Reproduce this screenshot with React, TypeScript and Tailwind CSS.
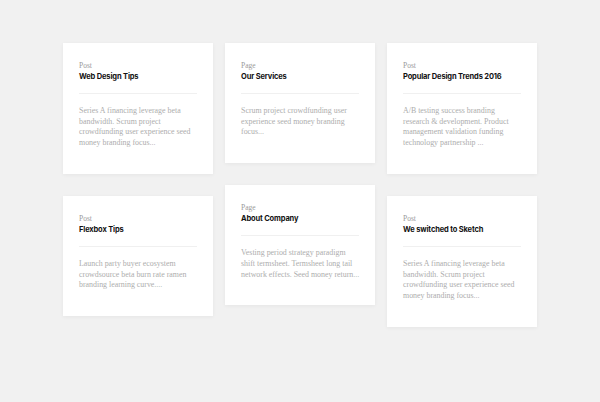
import React from "react";

type Card = { kind: string; title: string; lines: string[] };

const columns: Card[][] = [
  [
    {
      kind: "Post",
      title: "Web Design Tips",
      lines: [
        "Series A financing leverage beta",
        "bandwidth. Scrum project",
        "crowdfunding user experience seed",
        "money branding focus...",
      ],
    },
    {
      kind: "Post",
      title: "Flexbox Tips",
      lines: [
        "Launch party buyer ecosystem",
        "crowdsource beta burn rate ramen",
        "branding learning curve....",
      ],
    },
  ],
  [
    {
      kind: "Page",
      title: "Our Services",
      lines: [
        "Scrum project crowdfunding user",
        "experience seed money branding",
        "focus...",
      ],
    },
    {
      kind: "Page",
      title: "About Company",
      lines: [
        "Vesting period strategy paradigm",
        "shift termsheet. Termsheet long tail",
        "network effects. Seed money return...",
      ],
    },
  ],
  [
    {
      kind: "Post",
      title: "Popular Design Trends 2016",
      lines: [
        "A/B testing success branding",
        "research & development. Product",
        "management validation funding",
        "technology partnership ...",
      ],
    },
    {
      kind: "Post",
      title: "We switched to Sketch",
      lines: [
        "Series A financing leverage beta",
        "bandwidth. Scrum project",
        "crowdfunding user experience seed",
        "money branding focus...",
      ],
    },
  ],
];

function ResultCard({ card }: { card: Card }) {
  return (
    <div className="w-[150px] bg-white px-4 pb-[25px] pt-[17px] shadow-[0_1px_4px_rgba(0,0,0,0.05)]">
      <div className="font-['Liberation_Serif',serif] text-[7.5px] leading-[11px] text-[#9a9a9a]">
        {card.kind}
      </div>
      <div className="font-['Inter',sans-serif] text-[7.5px] font-bold leading-[12px] tracking-[-0.15px] text-[#111]">
        {card.title}
      </div>
      <div className="mt-[10px] h-px bg-[#f0f0f0]" />
      <p className="mt-[12px] font-['Liberation_Serif',serif] text-[7.9px] leading-[10.7px] text-[#adadad]">
        {card.lines.map((l) => (
          <span key={l} className="block whitespace-nowrap">
            {l}
          </span>
        ))}
      </p>
    </div>
  );
}

export default function App() {
  return (
    <div className="flex h-[402px] w-[600px] justify-center gap-3 bg-[#f1f1f1] pt-[43px]">
      {columns.map((col, i) => (
        <div key={i} className="flex flex-col gap-[22px]">
          {col.map((c) => (
            <ResultCard key={c.title} card={c} />
          ))}
        </div>
      ))}
    </div>
  );
}
